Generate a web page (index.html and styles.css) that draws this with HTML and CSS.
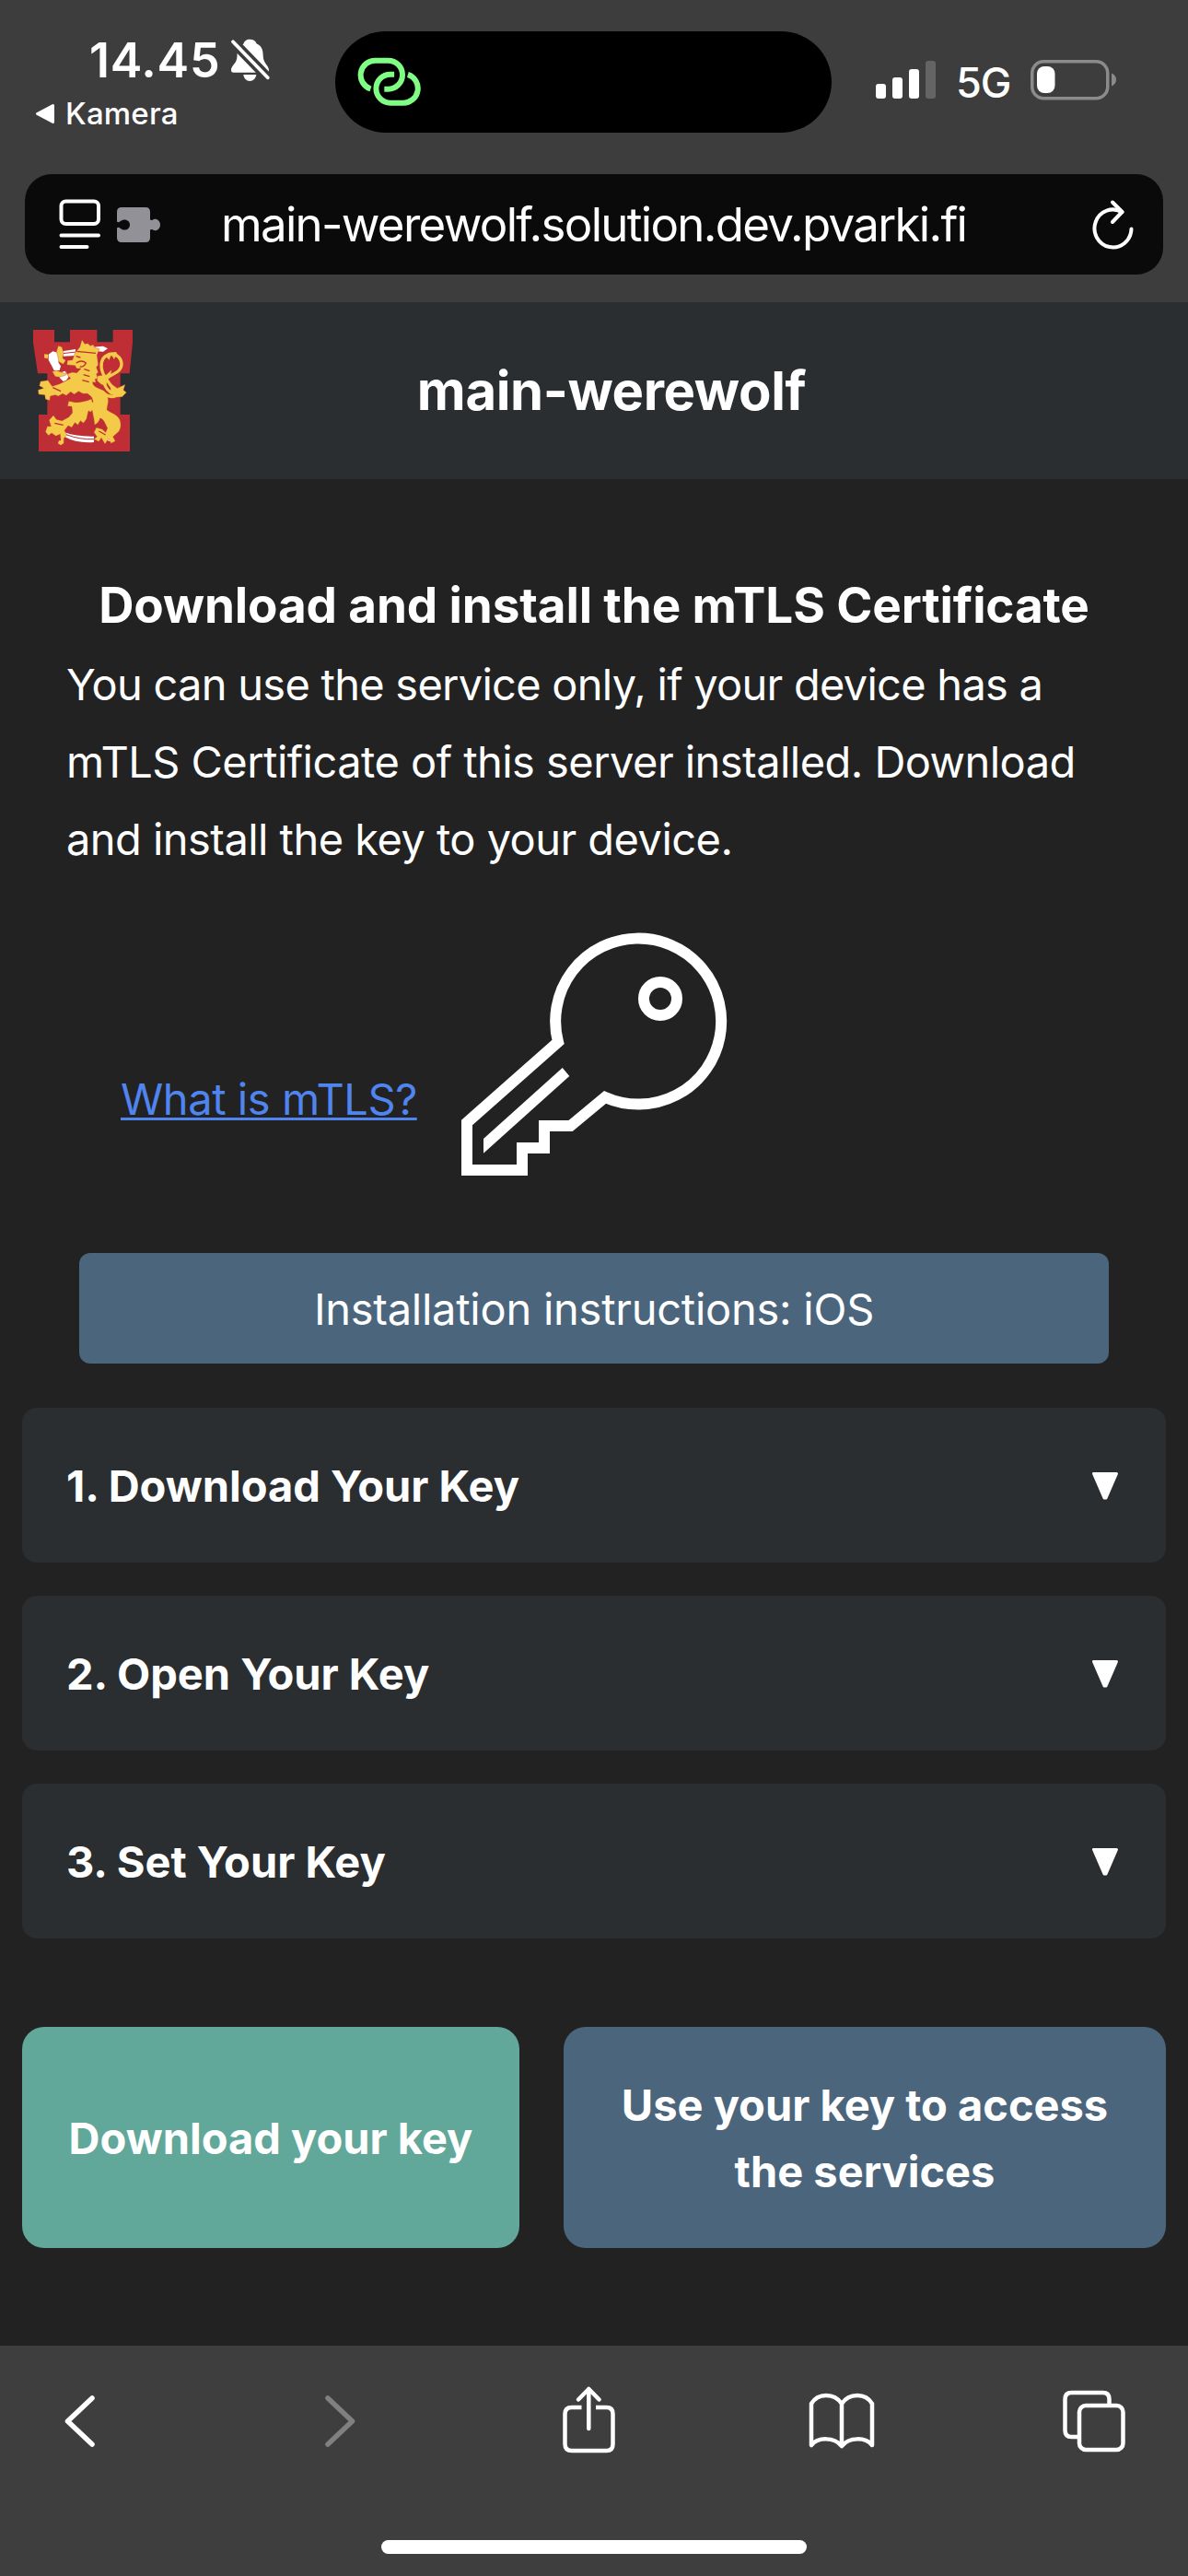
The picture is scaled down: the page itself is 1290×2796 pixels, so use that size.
FILE: index.html
```html
<!DOCTYPE html>
<html lang="en">
<head>
<meta charset="utf-8">
<title>main-werewolf</title>
<link rel="stylesheet" href="styles.css">
</head>
<body>
<header class="chrome">
  <div class="status">
    <div class="status-left">
      <div class="clock"><span class="time">14.45</span>
        <svg class="bell" viewBox="0 0 46 50"><path fill="#fff" d="M23.3 2.7c-4 0-6 2-7 5C10 11 9.5 17 9.5 21 9.3 29 3 31 3 36.2c0 1.7 1 2.5 2.6 2.5h35.8c1.7 0 2.6-.9 2.6-2.5C44 31 38 29 37.7 21c0-6-1-11-7-13.5-1-3-3.5-4.8-7.4-4.8zM16.3 41h14c-.5 4-3.3 7-7 7s-6.500-3-7-7z"/><path d="M5 5.300 42.700 44.300" stroke="#3d3d3d" stroke-width="11"/><path d="M5 5.300 42.700 44.300" stroke="#fff" stroke-width="3.800" stroke-linecap="round"/></svg>
      </div>
      <div class="back-app"><svg class="back-tri" viewBox="0 0 22 23"><path d="M2.500 11.500 19.500 2.500v18z" fill="#fff" stroke="#fff" stroke-width="3" stroke-linejoin="round"/></svg><span class="kamera">Kamera</span></div>
    </div>
    <div class="island">
      <svg class="hotspot" viewBox="0 0 69 57" fill="none" stroke="#80fd83" stroke-width="6"><path d="M14.500 36.500A15.800 15.800 0 0 1 20 5.700H33.500a15.500 15.500 0 0 1 0 31H29.300"/><path transform="rotate(180 34.700 28.700)" d="M14.500 36.500A15.800 15.800 0 0 1 20 5.700H33.500a15.500 15.500 0 0 1 0 31H29.300"/></svg>
    </div>
    <div class="status-right">
      <svg class="signal" viewBox="0 0 65 42" fill="#fff"><rect y="25" width="11" height="16" rx="3"/><rect x="18" y="18" width="11" height="23" rx="3"/><rect x="36" y="9" width="11" height="32" rx="3"/><rect x="54" width="11" height="41" rx="3" fill="#646464"/></svg>
      <span class="net">5G</span>
      <svg class="battery" viewBox="0 0 94 44"><rect x="1.750" y="1.750" width="82" height="40" rx="12.500" fill="none" stroke="#8b8b8b" stroke-width="3.500"/><rect x="7" y="7" width="19.500" height="29" rx="8" fill="#fff"/><path d="M88 14.500c3.500 1.500 5 4 5 7s-1.500 5.500-5 7z" fill="#8b8b8b"/></svg>
    </div>
  </div>
  <div class="urlbar">
    <svg class="reader" viewBox="0 0 46 56" fill="none" stroke="#fff" stroke-width="4" stroke-linecap="round"><rect x="2.500" y="2.500" width="40.500" height="24.500" rx="5"/><path d="M2.500 39.500H43M2.500 52H30.500"/></svg>
    <svg class="puzzle" viewBox="0 0 48 38"><path fill="#929198" d="M5 0H31Q36 0 36 5V13.500Q38 14.500 40 12.900C43.500 12 47 15 47 19S43.500 26 40 25.100Q38 23.500 36 24.500V33Q36 38 31 38H5Q0 38 0 33V22.500Q1.500 21 3.500 22.700C8 26.500 14 24 14 19S8 11.500 3.500 15.300Q1.500 17 0 15.500V5Q0 0 5 0Z"/></svg>
    <span class="url">main-werewolf.solution.dev.pvarki.fi</span>
    <svg class="reload" viewBox="0 0 46 56" fill="none" stroke="#fff" stroke-width="4" stroke-linecap="round" stroke-linejoin="round"><path d="M42.500 32.500A20 20.500 0 1 1 32.500 14.200"/><path d="M22 3.500 32.500 14 22 25"/></svg>
  </div>
</header>
<div class="site-header">
  <svg class="crest" viewBox="48 54 324 396">
    <path fill="#bf2e34" d="M48 54H117V94H168V54H256V94H308V54H372V96L362 196H332V330H363V450H66V330H94V196H63L48 96Z"/>
    <g fill="#fff"><path d="M143 124 186 117V138L146 140ZM244 110 276 107 291 115 276 125 256 124Z"/><path d="M98 134 112 124 128 128 134 146 130 160 138 172 134 186 116 186 108 170 98 152Z"/><path d="M134 194 152 188 164 206 156 218 146 222 134 210Z"/><path d="M150 388Q190 402 246 401V420Q190 424 150 402ZM286 400 304 408 298 418 286 412Z"/></g>
    <path d="M144 131 188 126M155 395Q200 412 246 410" stroke="#bf2e34" stroke-width="3" fill="none"/>
    <g fill="#f4ca49" stroke="#bf2e34" stroke-width="1" stroke-linejoin="round">
      <path d="M130 106 142 110 147 130 144 146 154 154 146 166 132 158 128 140 124 124ZM84 132 98 134 96 148 84 146ZM110 190 124 186 150 196 158 190 154 202 134 208 120 206Z"/>
      <path d="M184 130 190 122 200 110 207 86 216 100 226 98 234 106 244 102 248 112 264 116 256 136 260 168 254 176 260 192 254 198 260 214 250 214 252 226 242 224C242 238 256 242 270 248C284 252 292 266 293 286L288 314C302 326 322 328 330 346C336 362 334 378 326 386L308 402 316 416 302 424 294 408 282 426 270 406 262 418 246 410 256 402 246 388 254 372 274 378 284 388 290 374C282 358 276 342 266 342C264 352 256 360 248 364L246 346 240 316 236 322 228 318 222 344 212 358 202 350 194 364 184 356 174 372 162 366 150 382 158 396 148 408 148 424 138 430 128 424 132 414 138 414 136 394 122 400 108 390 98 398 88 386 94 368 106 368 100 348 114 332 124 346 142 350 164 338 176 324 174 304 160 302 164 286 184 290C208 290 226 284 240 278L226 262 210 262 196 254 182 264 170 256 156 268 144 262 130 270 120 266 104 270 102 284 88 280 86 266 66 264 64 250 82 244 68 236 72 222 96 218 110 238 134 230 170 212 158 198 176 192 190 194 204 180 190 180 184 170 158 168 160 154 176 152Z"/>
      <path d="M258 204 286 200 304 184 300 206 290 216 286 238 270 232 256 220ZM300 228 322 244 348 232 342 250 352 258 338 272 318 274 300 262Z"/>
    </g>
    <path d="M314 256C292 216 264 198 271 160C280 122 333 126 336 164C337 190 312 194 286 212C276 226 282 244 306 262" fill="none" stroke="#f4ca49" stroke-width="10"/>
    <path d="M280 262C300 276 316 272 326 262" fill="none" stroke="#f4ca49" stroke-width="10"/>
    <path fill="#f4ca49" d="M282 138 296 152 302 134 312 150 318 134 326 150 332 150 318 126 294 128Z"/>
    <path d="M190 124 252 130M188 140l14 4M188 162Q206 150 220 162 214 176 200 174M214 182l18 6M212 200l20 6M208 218l22 6M224 266Q240 270 242 290M112 242 138 254M118 358 146 364M262 384 284 396" fill="none" stroke="#bf2e34" stroke-width="4"/>
  </svg>
  <h1 class="site-title">main-werewolf</h1>
</div>
<main class="content">
  <h2 class="headline">Download and install the mTLS Certificate</h2>
  <p class="intro"><span class="wide-line">You can use the service only, if your device has a</span><br>mTLS Certificate of this server installed. Download<br>and install the key to your device.</p>
  <div class="key-row">
    <a class="help" href="#mtls">What is mTLS?</a>
    <svg class="key" viewBox="0 0 330 310" fill="none" stroke="#fff" stroke-width="12"><path d="M126 141 27 228.500V280H87V256H111V232H139.500L177 201A90 90 0 1 0 126 141Z"/><circle cx="237" cy="94" r="18"/><path fill="#fff" stroke="none" d="M45 246 130.700 169 138.300 178 45 261.700Z"/></svg>
  </div>
  <button class="platform">Installation instructions: iOS</button>
  <section class="steps">
    <div class="step"><span>1. Download Your Key</span><svg class="caret" viewBox="0 0 30 32"><path d="M2.500 2.500H27.500L16 29H14Z" fill="#fff" stroke="#fff" stroke-width="3" stroke-linejoin="round"/></svg></div>
    <div class="step"><span>2. Open Your Key</span><svg class="caret" viewBox="0 0 30 32"><path d="M2.500 2.500H27.500L16 29H14Z" fill="#fff" stroke="#fff" stroke-width="3" stroke-linejoin="round"/></svg></div>
    <div class="step"><span>3. Set Your Key</span><svg class="caret" viewBox="0 0 30 32"><path d="M2.500 2.500H27.500L16 29H14Z" fill="#fff" stroke="#fff" stroke-width="3" stroke-linejoin="round"/></svg></div>
  </section>
  <div class="actions">
    <button class="action download">Download your key</button>
    <button class="action access">Use your key to access<br>the services</button>
  </div>
</main>
<footer class="toolbar">
  <nav class="tools">
    <svg class="tool" viewBox="0 0 80 80"><path d="M54 15 27.500 40 54 65" stroke-width="5.500"/></svg>
    <svg class="tool dim" viewBox="0 0 80 80"><path d="M34 15 60.500 40 34 65" stroke-width="5.500"/></svg>
    <svg class="tool" viewBox="0 0 80 80"><path stroke-linecap="butt" d="M34.500 25H24Q16.500 25 16.500 32V65Q16.500 72 24 72H61.500Q68.500 72 68.500 65V32Q68.500 25 61.500 25H50"/><path d="M42.300 5V48M31 16.500 42.300 5 53.600 16.500"/></svg>
    <svg class="tool" viewBox="0 0 80 80"><path d="M8 66V21C15 9 33 9 41 21C49 9 67 9 74 21V66C67 57 49 57 41 67C33 57 15 57 8 66ZM41 21V67"/></svg>
    <svg class="tool" viewBox="0 0 80 80"><path d="M22 57H15.500Q8.500 57 8.500 50V16Q8.500 9 15.500 9H49.500Q56.500 9 56.500 16V22"/><rect x="24" y="23" width="47.500" height="48" rx="7"/></svg>
  </nav>
  <div class="home"></div>
</footer>
</body>
</html>
```
FILE: styles.css
```css
* { box-sizing: border-box; }
body {
  margin: 0;
  width: 1290px;
  height: 2796px;
  display: flex;
  flex-direction: column;
  background: #222;
  color: #fff;
  font-family: Inter, "Liberation Sans", sans-serif;
  overflow: hidden;
}
svg { display: block; flex: none; }
h1, h2, p { margin: 0; }
button { border: 0; color: inherit; font: inherit; }

.chrome { height: 328px; background: #3d3d3d; flex: none; }
.status { height: 189px; display: flex; align-items: flex-start; }
.status-left { width: 364px; padding-top: 36px; }
.clock { display: flex; height: 60px; padding-left: 97px; }
.time { width: 151px; font-size: 52px; font-weight: 600; line-height: 60px; letter-spacing: 0.7px; }
.bell { width: 46px; height: 50px; margin-top: 4px; }
.back-app { display: flex; align-items: center; height: 40px; margin-top: 7px; padding-left: 38px; }
.back-tri { width: 22px; height: 23px; }
.kamera { margin-left: 11px; font-size: 33px; line-height: 40px; font-weight: 500; letter-spacing: 0.2px; }
.island { width: 539px; height: 110px; margin-top: 34px; padding: 26px 24px; border-radius: 55px; background: #000; }
.hotspot { width: 69px; height: 57px; }
.status-right { display: flex; align-items: flex-start; padding: 65px 0 0 48px; }
.signal { width: 65px; height: 42px; margin-top: 1px; }
.net { width: 81px; margin-left: 22px; font-size: 45px; font-weight: 500; line-height: 50px; letter-spacing: -1px; }
.battery { width: 94px; height: 44px; }

.urlbar { display: flex; align-items: center; height: 109px; margin: 0 27px; padding-left: 37px; border-radius: 29px; background: #0a0a0a; }
.reader { width: 46px; height: 56px; }
.puzzle { width: 48px; height: 38px; margin-left: 17px; }
.url { width: 946px; margin-left: 65px; font-size: 51px; line-height: 60px; letter-spacing: -1.7px; white-space: nowrap; }
.reload { width: 46px; height: 56px; }

.site-header { display: flex; align-items: center; flex: none; height: 192px; padding: 0 106px 0 36px; background: #2a2e31; }
.crest { width: 108px; height: 132px; }
.site-title { flex: 1; text-align: center; font-size: 58px; font-weight: 700; line-height: 70px; letter-spacing: -0.4px; }

.content { flex: 1; padding-top: 95px; }
.headline { font-size: 53px; font-weight: 700; line-height: 84px; letter-spacing: -0.12px; text-align: center; white-space: nowrap; }
.intro { margin-top: 2px; padding-left: 72px; font-size: 47px; line-height: 84px; letter-spacing: -0.54px; white-space: nowrap; }
.wide-line { letter-spacing: -0.74px; }
.key-row { display: flex; align-items: flex-start; height: 310px; margin-top: 37px; padding-left: 131px; }
.help { width: 322px; margin-top: 174px; font-size: 47px; line-height: 58px; letter-spacing: -0.45px; color: #5084ef; white-space: nowrap; text-decoration-thickness: 3px; text-underline-offset: 3px; text-decoration-skip-ink: none; }
.key { width: 330px; height: 310px; margin-left: 27px; }
.platform { display: block; width: 1118px; height: 120px; margin: 60px auto 0; padding: 1px 0 0; border-radius: 12px; background: #4b667c; font-size: 47px; letter-spacing: -0.25px; }
.steps { display: flex; flex-direction: column; gap: 36px; padding: 48px 24px 0; }
.step { display: flex; align-items: center; justify-content: space-between; height: 168px; padding: 1px 51px 0 48px; border-radius: 16px; background: #2a2e31; font-size: 47px; font-weight: 700; }
.caret { width: 30px; height: 32px; }
.actions { display: flex; gap: 48px; padding: 96px 24px 0; }
.action { height: 240px; padding: 2px 0 0; border-radius: 24px; font-size: 47px; font-weight: 700; line-height: 72px; text-align: center; }
.download { width: 540px; background: #61a89a; }
.access { width: 654px; background: #4b667c; }

.toolbar { flex: none; height: 250px; padding-top: 42px; background: #3e3e3e; }
.tools { display: flex; justify-content: space-between; padding: 0 62px 0 46px; }
.tool { width: 80px; height: 80px; fill: none; stroke: #fff; stroke-width: 4.5px; stroke-linecap: round; stroke-linejoin: round; }
.dim { stroke: #808080; }
.home { width: 462px; height: 15px; margin: 89px auto 0; border-radius: 8px; background: #fff; }
```
